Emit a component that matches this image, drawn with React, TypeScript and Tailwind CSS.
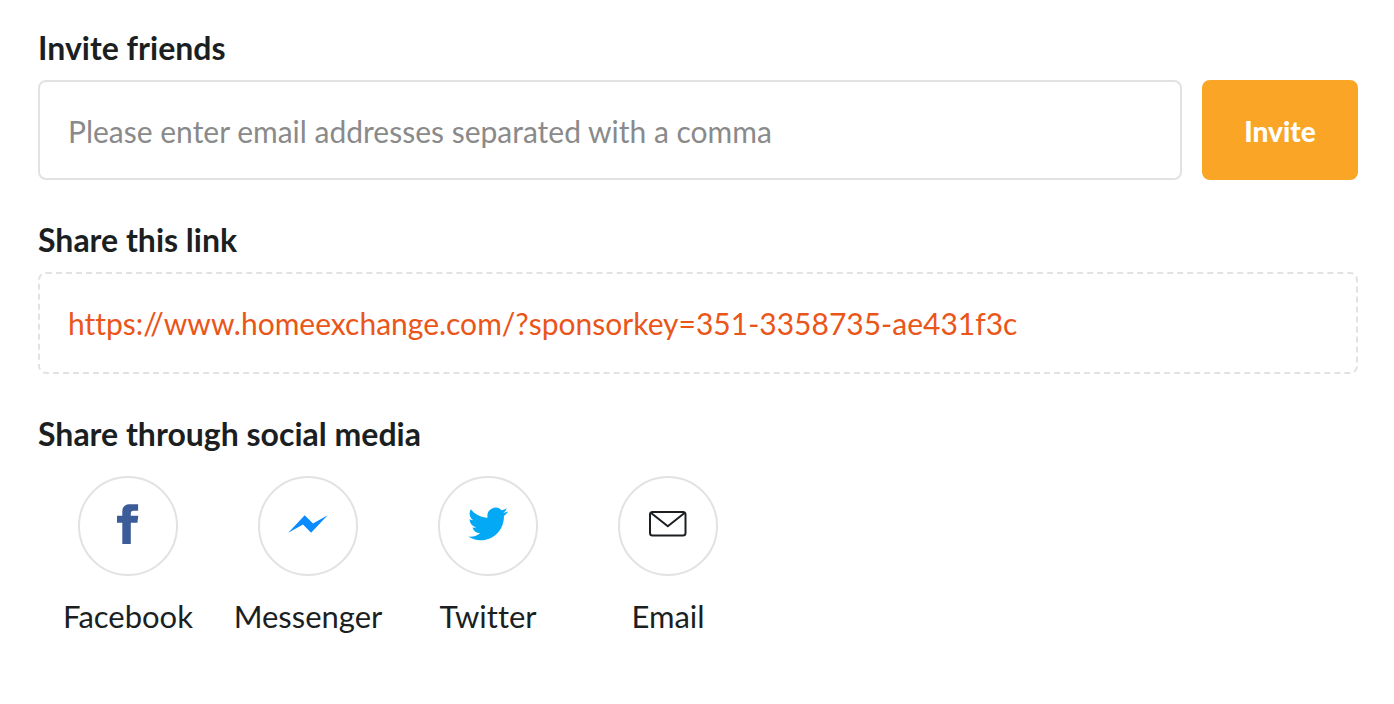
import React from "react";

const FacebookIcon = () => (
  <svg viewBox="0 0 22 40" className="h-10 w-[22px] fill-[#3b5c98]" aria-hidden="true">
    <path d="M5.3 40V18.8H0V11.7h5.3V7.6C5.3 2.6 8.1.2 13.2.2h7.9v6.6h-4.6c-2 0-2.7.9-2.7 2.6v2.3h7.5l-.9 7.1h-6.6V40z" />
  </svg>
);

const MessengerIcon = () => (
  <svg viewBox="0 0 40 18" className="h-[18px] w-10 fill-[#0a8cff]" aria-hidden="true">
    <path d="M0.3 17.7 16.7 0.2 25 8.4 39.6 0.2 23.1 17.7 15 9.5z" />
  </svg>
);

const TwitterIcon = () => (
  <svg viewBox="0 2 24 20" className="h-[34px] w-10 fill-[#03a9f4]" aria-hidden="true">
    <path d="M23.95 4.57a10 10 0 01-2.82.78 4.96 4.96 0 002.16-2.73c-.95.56-2 .96-3.13 1.19a4.92 4.92 0 00-8.38 4.48C7.69 8.1 4.07 6.13 1.64 3.16a4.82 4.82 0 00-.67 2.48c0 1.71.87 3.21 2.19 4.1a4.9 4.9 0 01-2.23-.62v.06a4.92 4.92 0 003.95 4.83 5 5 0 01-2.21.08 4.94 4.94 0 004.6 3.42A9.87 9.87 0 010 19.54a14 14 0 007.55 2.21c9.05 0 14-7.5 14-13.99 0-.21 0-.42-.02-.63a9.94 9.94 0 002.46-2.55z" />
  </svg>
);

const EmailIcon = () => (
  <svg
    viewBox="0 0 38 26"
    className="h-[26px] w-[38px] fill-none stroke-[#1b1f22] stroke-2"
    strokeLinejoin="round"
    aria-hidden="true"
  >
    <rect x="1" y="1" width="35.5" height="23.6" rx="2.6" />
    <path d="M1.8 1.8 18.8 15.3 35.8 1.8" />
  </svg>
);

const networks = [
  { name: "Facebook", icon: <FacebookIcon /> },
  { name: "Messenger", icon: <MessengerIcon /> },
  { name: "Twitter", icon: <TwitterIcon /> },
  { name: "Email", icon: <EmailIcon /> },
];

const shareLink = "https://www.homeexchange.com/?sponsorkey=351-3358735-ae431f3c";

export default function App() {
  return (
    <main className="bg-white pt-[30px] pr-9 pb-16 pl-[38px] font-['Lato',sans-serif] text-3xl text-[#1b1f22] [font-variant-ligatures:none]">
      {/* Invite by email */}
      <form onSubmit={(e) => e.preventDefault()}>
        <label htmlFor="emails" className="block text-[32px] leading-9 font-bold">
          Invite friends
        </label>
        <div className="mt-3.5 flex gap-5">
          <input
            id="emails"
            type="text"
            placeholder="Please enter email addresses separated with a comma"
            className="h-[100px] min-w-0 flex-1 rounded-lg border-2 border-[#e2e2e2] px-7 pt-0.5 placeholder:text-[#8a8a8a]"
          />
          <button
            type="submit"
            className="w-[156px] rounded-lg bg-[#faa526] pt-1 text-[28px] font-black text-white"
          >
            Invite
          </button>
        </div>
      </form>

      {/* Referral link */}
      <section className="mt-[42px]">
        <h2 className="text-[32px] leading-9 font-bold">Share this link</h2>
        <div className="mt-3.5 rounded-lg border-2 border-dashed border-[#e2e2e2] px-7 py-[31px]">
          <a href={shareLink} className="block break-all text-[#ea5519]">
            {shareLink}
          </a>
        </div>
      </section>

      {/* Social media */}
      <section className="mt-[42px]">
        <h2 className="text-[32px] leading-9 font-bold">Share through social media</h2>
        <ul className="mt-6 flex flex-wrap">
          {networks.map(({ name, icon }) => (
            <li key={name} className="w-[180px]">
              <button
                type="button"
                className="flex w-full flex-col items-center gap-[22px] text-[31px] leading-9"
              >
                <span className="flex size-[100px] items-center justify-center rounded-full border-2 border-[#e2e2e2] pb-1">
                  {icon}
                </span>
                {name}
              </button>
            </li>
          ))}
        </ul>
      </section>
    </main>
  );
}
